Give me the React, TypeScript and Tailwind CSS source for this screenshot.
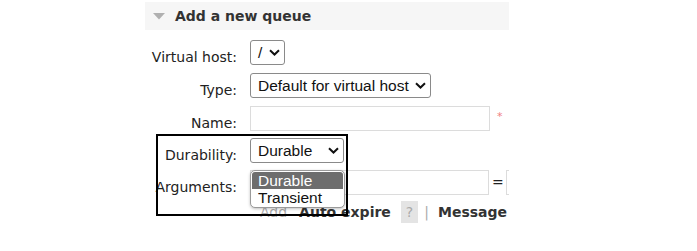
import React from "react";

const verdana = { fontFamily: '"DejaVu Sans", Verdana, sans-serif' };
const arial = { fontFamily: '"Liberation Sans", Arial, sans-serif' };

function Chevron() {
  return (
    <svg width="11" height="7" viewBox="0 0 11 7" className="shrink-0">
      <path d="M1 1.2 L5.5 5.5 L10 1.2" fill="none" stroke="#111" strokeWidth="2" />
    </svg>
  );
}

function Select({ w, text }: { w: string; text: string }) {
  return (
    <div
      className={`${w} shrink-0 h-[25px] border border-[#8a8a8a] rounded-[3px] bg-white flex items-center justify-between pl-[7px] pr-[4px] text-[15.5px] text-[#111] leading-none`}
      style={arial}
    >
      <span>{text}</span>
      <Chevron />
    </div>
  );
}

function Label({ children }: { children: React.ReactNode }) {
  return (
    <div className="w-[92px] shrink-0 text-right pt-[9px] text-[14px] leading-[17px] text-[#222]" style={verdana}>
      {children}
    </div>
  );
}

export default function App() {
  return (
    <div className="w-[697px] h-[251px] bg-white relative overflow-hidden">
      <div className="ml-[145px] pt-[2px] w-[364px] overflow-hidden">
        <div className="h-[28px] bg-[#f6f6f6] flex items-center pl-[8px]">
          <svg width="12" height="7" viewBox="0 0 12 7">
            <path d="M0 0 L12 0 L6 6.5 Z" fill="#b0b0b0" />
          </svg>
          <span className="ml-[10px] text-[14px] font-bold text-[#333] leading-none" style={verdana}>
            Add a new queue
          </span>
        </div>

        <div className="flex mt-[10px] h-[25px] gap-[13px]">
          <Label>Virtual host:</Label>
          <Select w="w-[35px]" text="/" />
        </div>
        <div className="flex mt-[8px] h-[25px] gap-[13px]">
          <Label>Type:</Label>
          <Select w="w-[181px]" text="Default for virtual host" />
        </div>
        <div className="flex mt-[8px] h-[25px] gap-[13px] items-start">
          <Label>Name:</Label>
          <div className="w-[240px] shrink-0 h-[25px] border border-[#dcdcdc] bg-white" />
          <span className="ml-[-6px] mt-[3px] text-[11px] text-[#f08080]" style={verdana}>*</span>
        </div>
        <div className="flex mt-[7px] h-[25px] gap-[13px]">
          <Label>Durability:</Label>
          <Select w="w-[94px]" text="Durable" />
        </div>
        <div className="flex mt-[7px] h-[25px] gap-[13px] items-start">
          <Label>Arguments:</Label>
          <div className="flex items-center shrink-0">
            <div className="w-[239px] shrink-0 h-[25px] border border-[#dcdcdc] bg-white" />
            <span className="ml-[3px] shrink-0 text-[14px] text-[#222]" style={verdana}>=</span>
            <div className="ml-[2px] w-[100px] shrink-0 h-[25px] border border-[#dcdcdc] bg-white" />
          </div>
        </div>
        <div className="flex mt-[6px] ml-[115px] items-center text-[14px] leading-[17px] whitespace-nowrap" style={verdana}>
          <span className="text-[#aaa]">Add</span>
          <span className="ml-[12px] font-bold text-[#333]">Auto expire</span>
          <span className="ml-[10px] bg-[#e4e4e4] text-[#aaa] px-[5px] leading-[22px]">?</span>
          <span className="ml-[6px] text-[#aaa]">|</span>
          <span className="ml-[9px] font-bold text-[#333]">Message</span>
        </div>
      </div>

      {/* dropdown list overlay */}
      <div
        className="absolute left-[250px] top-[170px] w-[95px] h-[38px] bg-white border border-[#9a9a9a] rounded-[5px] shadow-[0_1px_3px_rgba(0,0,0,0.25)] p-[1px] text-[15.5px] leading-[17px] text-[#111]"
        style={arial}
      >
        <div className="bg-[#6d6d6d] text-white rounded-t-[3px] pl-[6px] h-[17px]">Durable</div>
        <div className="pl-[6px] h-[17px]">Transient</div>
      </div>

      {/* annotation rectangle */}
      <div className="absolute left-[156px] top-[134px] w-[192px] h-[82px] border-2 border-black" />
    </div>
  );
}
